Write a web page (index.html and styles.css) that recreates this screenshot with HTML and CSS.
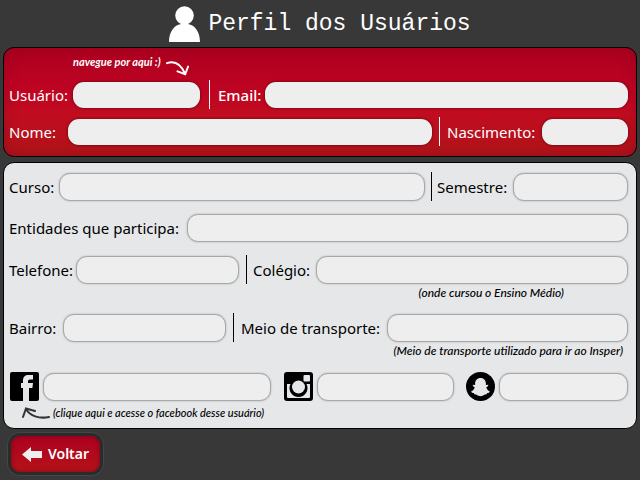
FILE: index.html
```html
<!DOCTYPE html>
<html lang="pt-BR">
<head>
<meta charset="utf-8">
<meta name="viewport" content="width=device-width, initial-scale=1">
<title>Perfil dos Usuários</title>
<link rel="stylesheet" href="styles.css">
</head>
<body>
<header class="header">
  <svg class="avatar" viewBox="0 0 31 36" aria-hidden="true"><circle cx="15.5" cy="9.500" r="9.300"/><path d="M0 36C0 26 5 19 12 18v-3h7v3c7 1 12 8 12 18z"/></svg>
  <h1 class="title">Perfil dos Usuários</h1>
</header>
<form class="profile">
  <section class="panel panel-red">
    <p class="tip">navegue por aqui :)
      <svg class="tip-arrow" viewBox="0 0 26 18" aria-hidden="true"><path d="M2 4C10 1 16 4 21 15M13 12.500L21 15.500L24 7.500"/></svg>
    </p>
    <div class="row row-user">
      <label for="usuario">Usuário:</label>
      <input class="field" id="usuario" type="text">
      <span class="divider"></span>
      <label class="strong" for="email">Email:</label>
      <input class="field" id="email" type="email">
    </div>
    <div class="row row-name">
      <label for="nome">Nome:</label>
      <input class="field" id="nome" type="text">
      <span class="divider"></span>
      <label for="nascimento">Nascimento:</label>
      <input class="field" id="nascimento" type="text">
    </div>
  </section>
  <section class="panel panel-light">
    <div class="row row-course">
      <label for="curso">Curso:</label>
      <input class="field" id="curso" type="text">
      <span class="divider"></span>
      <label for="semestre">Semestre:</label>
      <input class="field" id="semestre" type="text">
    </div>
    <div class="row row-groups">
      <label for="entidades">Entidades que participa:</label>
      <input class="field" id="entidades" type="text">
    </div>
    <div class="row row-phone">
      <label for="telefone">Telefone:</label>
      <input class="field" id="telefone" type="tel">
      <span class="divider"></span>
      <label for="colegio">Colégio:</label>
      <input class="field" id="colegio" type="text">
    </div>
    <p class="hint hint-school">(onde cursou o Ensino Médio)</p>
    <div class="row row-district">
      <label for="bairro">Bairro:</label>
      <input class="field" id="bairro" type="text">
      <span class="divider"></span>
      <label for="transporte">Meio de transporte:</label>
      <input class="field" id="transporte" type="text">
    </div>
    <p class="hint hint-transport">(Meio de transporte utilizado para ir ao Insper)</p>
    <div class="row row-social">
      <a class="icon" href="#facebook" aria-label="Abrir Facebook"><svg viewBox="0 0 29 29"><rect width="29" height="29" rx="2"/><path fill="#e6e7e9" d="M13 29V16h-2v-5h2V8.500C13 5 15 3 18.500 3H23v4.500h-3c-1.200 0-2 .8-2 2V11h5l-.6 5H19v13z"/></svg></a>
      <input class="field" id="facebook" type="text" aria-label="Facebook">
      <label class="icon" for="instagram" aria-label="Instagram"><svg viewBox="0 0 29 29"><rect width="29" height="29" rx="3"/><path fill="#e6e7e9" d="M3 12h3.500a9 9 0 1 0 16 0H26v13a1 1 0 0 1-1 1H4a1 1 0 0 1-1-1z"/><circle cx="14.500" cy="15" r="6.500" fill="#e6e7e9"/><rect x="19.500" y="3" width="6.500" height="6.500" rx="1" fill="#e6e7e9"/></svg></label>
      <input class="field" id="instagram" type="text">
      <label class="icon" for="snapchat" aria-label="Snapchat"><svg viewBox="0 0 29 29"><circle cx="14.500" cy="14.500" r="14.500"/><path fill="#e6e7e9" d="M14.500 6c3.500 0 5.400 2.500 5.400 5.500v1.500l2.300-.2c.3 1.100-.6 1.900-1.900 2.400.5 2 1.500 3.300 3.600 4.200-.3 1.200-1.600 1.500-2.700 1.700l-.7 1.300c-2-.3-2.800 1.900-6 1.900s-4-2.200-6-1.900l-.7-1.300c-1.100-.2-2.400-.5-2.700-1.700 2.100-.9 3.100-2.200 3.600-4.200-1.300-.5-2.200-1.300-1.900-2.400l2.300.2v-1.500C9.100 8.500 11 6 14.500 6z"/></svg></label>
      <input class="field" id="snapchat" type="text">
    </div>
    <p class="hint hint-facebook">
      <svg class="hint-arrow" viewBox="0 0 28 13" aria-hidden="true"><path d="M27 10C17 12 8 9 4 2M1 10L4 1.500L13 4"/></svg>
      (clique aqui e acesse o facebook desse usuário)
    </p>
  </section>
  <button class="back" type="button">
    <svg class="back-arrow" viewBox="0 0 20 15" aria-hidden="true"><path d="M0 7.500L9 0v4h11v7H9v4z"/></svg>
    Voltar
  </button>
</form>
</body>
</html>
```
FILE: styles.css
```css
* {
  box-sizing: border-box;
}

body {
  margin: 0;
  background: #383838;
  color: #000;
  font: 15px/20px "Noto Sans", "Open Sans", sans-serif;
  font-variant-ligatures: none;
}

p,
h1 {
  margin: 0;
}

svg {
  display: block;
}

.header {
  display: flex;
  justify-content: center;
  align-items: center;
  gap: 8px;
  height: 47px;
  color: #fff;
}

.avatar {
  width: 31px;
  height: 36px;
  fill: currentColor;
}

.title {
  font: 23px/28px "Liberation Mono", monospace;
}

.profile {
  padding: 0 3px 4px;
}

.panel {
  border: 1px solid #000;
  border-radius: 11px;
}

.panel-red {
  display: grid;
  gap: 8px;
  padding: 6px 8px 10px 5px;
  color: #fff;
  background: linear-gradient(#ad0020, #bf0422 40%, #c10c20 60%, #b01419);
  box-shadow: inset 0 0 14px rgba(120, 0, 25, 0.4);
}

.panel-light {
  margin-top: 5px;
  padding: 9px 8px 6px 5px;
  background: #e6e7e9;
}

.row {
  display: grid;
  align-items: center;
  min-height: 28px;
}

.row label {
  white-space: nowrap;
}

.row-user {
  grid-template-columns: 64px 127px 18px 47px 1fr;
}

.row-name {
  grid-template-columns: 59px 1fr 15px 95px 86px;
}

.row-course {
  grid-template-columns: 50px 1fr 12px 76px 115px;
}

.row-groups {
  grid-template-columns: 178px 1fr;
}

.row-phone {
  grid-template-columns: 67px 163px 14px 63px 1fr;
}

.row-district {
  grid-template-columns: 54px 163px 15px 146px 1fr;
}

.row-social {
  grid-template-columns: 34px 228px 46px 137px 45px 1fr;
}

.row-groups,
.row-phone {
  margin-top: 13px;
}

.strong {
  font-weight: 500;
}

.field {
  width: 100%;
  min-width: 0;
  height: 28px;
  margin: 0;
  padding: 0 10px;
  border: 1px solid #a6a8aa;
  border-radius: 11px;
  background: #eee;
  box-shadow: 0 0 2px rgba(0, 0, 0, 0.25);
  font: inherit;
}

.panel-red .field {
  height: 26px;
  border: 0;
  box-shadow: 0 0 3px rgba(60, 0, 10, 0.8);
}

.divider {
  justify-self: center;
  width: 1px;
  height: 29px;
  background: currentColor;
}

.tip {
  display: flex;
  gap: 4px;
  height: 18px;
  padding-left: 64px;
  font: italic 700 11px/16px Lato, sans-serif;
}

.tip-arrow {
  width: 25px;
  height: 18px;
  margin-top: 5px;
  fill: none;
  stroke: currentColor;
  stroke-width: 2;
  stroke-linecap: round;
}

.hint {
  font: italic 500 12px/18px Lato, sans-serif;
}

.hint-school {
  margin-bottom: 11px;
  padding-right: 64px;
  text-align: right;
}

.hint-transport {
  margin-bottom: 12px;
  padding-right: 5px;
  text-align: right;
}

.hint-facebook {
  display: flex;
  align-items: center;
  gap: 3px;
  margin-top: 3px;
  padding-left: 13px;
  font-size: 11px;
}

.hint-arrow {
  width: 28px;
  height: 13px;
  fill: none;
  stroke: #333;
  stroke-width: 2;
  stroke-linecap: round;
}

.icon {
  width: 29px;
  margin-left: 1px;
}

.icon svg {
  width: 29px;
  height: 29px;
}

label.icon {
  justify-self: end;
  margin-right: 4px;
}

.back {
  display: flex;
  justify-content: center;
  align-items: center;
  gap: 6px;
  width: 89px;
  height: 36px;
  margin: 7px 0 0 8px;
  padding: 0;
  border: 0;
  border-radius: 9px;
  color: #fff;
  background: linear-gradient(#ad0020, #b5121a);
  box-shadow: 0 0 0 3px #2b2b2b, 0 0 0 4px #454545, inset 0 0 4px rgba(90, 0, 20, 0.6);
  font: 600 14px/20px "Noto Sans", "Open Sans", sans-serif;
}

.back-arrow {
  width: 20px;
  height: 15px;
  fill: #eee;
}
```
